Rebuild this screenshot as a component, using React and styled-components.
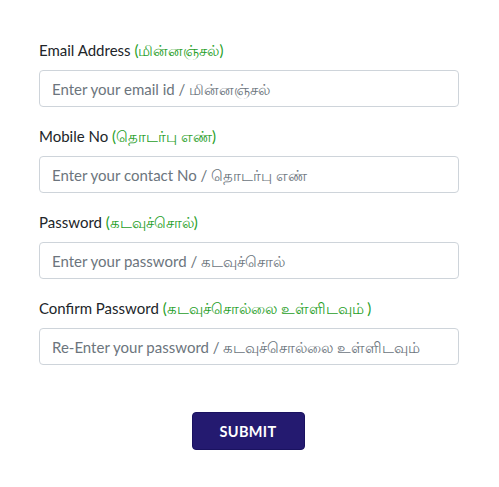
import styled, { createGlobalStyle } from "styled-components";

const GlobalStyle = createGlobalStyle`
  body {
    margin: 0;
    background: #ffffff;
    font-family: "Lato", "Open Sans", "Noto Sans", sans-serif;
  }
`;

const Form = styled.form`
  display: flex;
  flex-direction: column;
  padding: 39px 40px 0 39px;
  width: 420px;
`;

const Field = styled.div`
  display: flex;
  flex-direction: column;
  gap: 9px;
  margin-bottom: 18px;
`;

const Label = styled.label`
  font-size: 15px;
  line-height: 22px;
  color: #212529;
`;

const Tamil = styled.span`
  color: #1f9e1f;
`;

const Input = styled.input`
  box-sizing: border-box;
  width: 420px;
  height: 37px;
  padding: 0 12px;
  border: 1px solid #ced4da;
  border-radius: 4px;
  font-family: inherit;
  font-size: 15px;
  color: #495057;
  outline: none;

  &::placeholder {
    color: #6c757d;
  }
`;

const Actions = styled.div`
  display: flex;
  justify-content: center;
  margin-top: 29px;
  padding-right: 2px;
`;

const SubmitButton = styled.button`
  width: 113px;
  height: 38px;
  border: 1px solid #1a1260;
  border-radius: 4px;
  background: #241a70;
  color: #ffffff;
  font-family: inherit;
  font-weight: 700;
  font-size: 14.5px;
  letter-spacing: 0.3px;
  cursor: pointer;
`;

const fields = [
  {
    id: "email",
    label: "Email Address",
    tamil: "(மின்னஞ்சல்)",
    placeholder: "Enter your email id / மின்னஞ்சல்",
    type: "email",
  },
  {
    id: "mobile",
    label: "Mobile No",
    tamil: "(தொடர்பு எண்)",
    placeholder: "Enter your contact No / தொடர்பு எண்",
    type: "text",
  },
  {
    id: "password",
    label: "Password",
    tamil: "(கடவுச்சொல்)",
    placeholder: "Enter your password / கடவுச்சொல்",
    type: "password",
  },
  {
    id: "confirm",
    label: "Confirm Password",
    tamil: "(கடவுச்சொல்லை உள்ளிடவும் )",
    placeholder: "Re-Enter your password / கடவுச்சொல்லை உள்ளிடவும்",
    type: "password",
  },
];

const App = () => {
  return (
    <>
      <GlobalStyle />
      <Form onSubmit={(e) => e.preventDefault()}>
        {fields.map((field) => (
          <Field key={field.id}>
            <Label htmlFor={field.id}>
              {field.label} <Tamil>{field.tamil}</Tamil>
            </Label>
            <Input id={field.id} type={field.type} placeholder={field.placeholder} />
          </Field>
        ))}
        <Actions>
          <SubmitButton type="submit">SUBMIT</SubmitButton>
        </Actions>
      </Form>
    </>
  );
};

export default App;
